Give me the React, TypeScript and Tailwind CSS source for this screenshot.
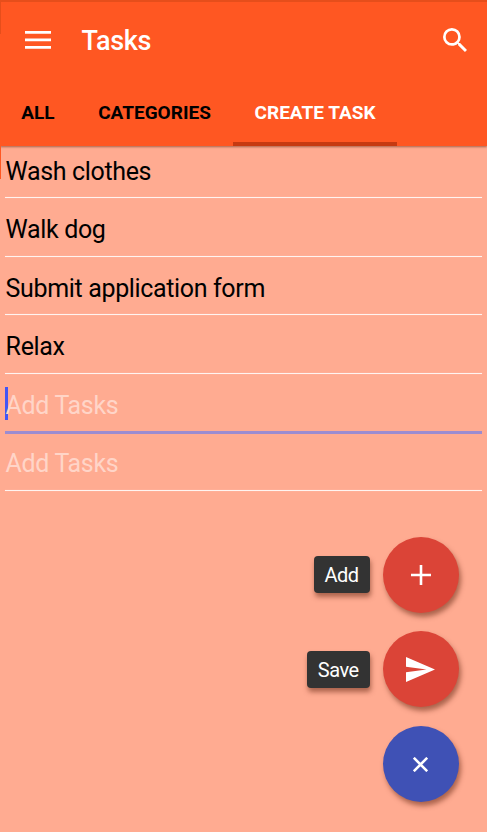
import type { ReactNode } from "react";

const saved = ["Wash clothes", "Walk dog", "Submit application form", "Relax"];

function Row({ children, active = false }: { children: ReactNode; active?: boolean }) {
  return (
    <div className="relative h-[58.6px] shrink-0">
      <div className="flex h-[54px] items-center pt-[10px] pl-[0.6px] text-[25px] leading-[30px] tracking-[-0.35px] whitespace-nowrap">{children}</div>
      <div className={active ? "absolute inset-x-0 bottom-[-2px] h-[3px] bg-[#9c8cd0]" : "absolute inset-x-0 bottom-0 h-px bg-[#fff4f0] shadow-[0_0_1px_rgba(255,244,240,0.6)]"} />
    </div>
  );
}

function Fab({ label, color, children }: { label?: string; color: string; children: ReactNode }) {
  return (
    <div className="flex items-center justify-end gap-[13px]">
      {label && (
        <span className="flex h-[37px] items-center rounded-[4px] bg-[#333] px-[11px] pt-px text-[20px] tracking-[-0.5px] text-white shadow-[1px_4px_5px_rgba(90,30,10,0.5)]">
          {label}
        </span>
      )}
      <button className={`flex size-[76px] items-center justify-center rounded-full shadow-[2px_4px_5px_rgba(90,30,10,0.5)] ${color}`}>
        {children}
      </button>
    </div>
  );
}

export default function App() {
  return (
    <div className="relative flex h-[832px] w-[487px] flex-col overflow-hidden bg-[#ffab91] font-['Roboto',sans-serif] text-black">
      <header className="relative z-10 flex h-[146px] shrink-0 flex-col border-t-2 border-[#e64e1b] bg-[#ff5722] shadow-[0_1px_2px_rgba(80,30,10,0.5)]">
        <div className="flex h-[76px] items-center pr-[20.5px] pl-[25px] text-white">
          <svg className="-mt-px" width="26" height="18" viewBox="0 0 26 18" fill="currentColor">
            <path d="M0 0h26v2.7H0zM0 7.5h26v2.7H0zM0 15h26v2.7H0z" />
          </svg>
          <h1 className="mt-[2px] ml-[30.5px] text-[27px] font-medium tracking-[-0.3px]">Tasks</h1>
          <svg className="ml-auto" width="24" height="24" viewBox="3 3 17.5 17.5" fill="currentColor">
            <path d="M15.5 14h-.79l-.28-.27A6.47 6.47 0 0 0 16 9.5 6.5 6.5 0 1 0 9.5 16c1.61 0 3.09-.59 4.23-1.57l.27.28v.79l5 4.99L20.49 19l-4.99-5zm-6 0C7.01 14 5 11.99 5 9.5S7.01 5 9.5 5 14 7.01 14 9.5 11.99 14 9.5 14z" />
          </svg>
        </div>
        <nav className="flex flex-1 text-[19px] font-bold whitespace-nowrap">
          <div className="flex w-[76px] items-center justify-center pt-[3px]">ALL</div>
          <div className="flex w-[157px] items-center justify-center pt-[3px]">CATEGORIES</div>
          <div className="relative flex w-[164px] items-center justify-center pt-[3px] text-white">
            CREATE TASK
            <div className="absolute inset-x-0 bottom-0 h-[4px] bg-[#c63a11]" />
          </div>
        </nav>
      </header>
      <div className="absolute top-0 left-0 z-20 h-[34px] w-px bg-[#e64e1b]" />
      <div className="absolute top-[146px] left-0 z-20 h-[33px] w-px bg-[#ff5722]" />

      <main className="-mt-[6.5px] flex flex-col pr-[5px] pl-[5px]">
        {saved.map((task) => (
          <Row key={task}>{task}</Row>
        ))}
        <Row active>
          <div className="absolute top-[13px] left-0 h-[33px] w-[2.5px] bg-[#4255f5]" />
          <span className="relative text-[#ffd5c8]">Add Tasks</span>
        </Row>
        <Row>
          <span className="text-[#ffd5c8]">Add Tasks</span>
        </Row>
      </main>

      <div className="absolute top-[536.7px] right-[28.4px] flex flex-col gap-[18.7px]">
        <Fab label="Add" color="bg-[#db4437]">
          <svg width="20" height="20" viewBox="0 0 20 20" stroke="#fff" strokeWidth="2.6">
            <path d="M10 0v20M0 10h20" />
          </svg>
        </Fab>
        <Fab label="Save" color="bg-[#db4437]">
          <svg width="29" height="25" viewBox="0 0 29 25" fill="#fff">
            <path d="M0 25 29 12.5 0 0v9.7l20.5 2.8L0 15.3z" />
          </svg>
        </Fab>
        <Fab color="bg-[#3f51b5]">
          <svg width="15" height="15" viewBox="0 0 15 15" stroke="#fff" strokeWidth="2.6">
            <path d="M.8.8l13.4 13.4M14.2.8.8 14.2" />
          </svg>
        </Fab>
      </div>
    </div>
  );
}
